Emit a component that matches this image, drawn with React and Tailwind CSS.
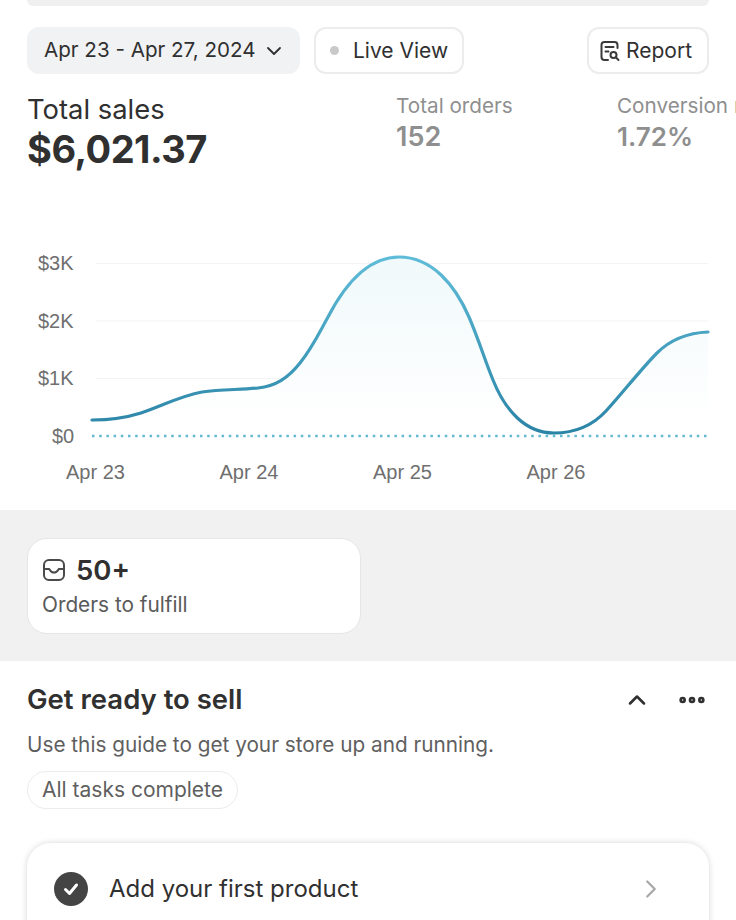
import React from "react";
import { ChevronDown, ChevronRight, ChevronUp, Ellipsis } from "lucide-react";

const xLabels = ["Apr 23", "Apr 24", "Apr 25", "Apr 26"];
const line =
  "M92 420 C112 420 125 418 141 413 C162 406 180 396 202 392 C222 389 240 390 258 388 C276 386 288 378 300 363 C312 348 318 335 328 317 C342 290 365 257 399 257 C432 257 455 285 469 317 C480 343 484 358 493 380 C505 410 525 433 554 433 C578 433 594 424 606 411 C620 396 642 368 657 353 C668 342 685 333 708 332";

function ReportIcon() {
  return (
    <svg width="22" height="22" viewBox="0 0 22 22" fill="none" stroke="#3a3a3a" strokeWidth="2" strokeLinecap="round">
      <path d="M9 20H5.500A3 3 0 0 1 2.500 17V5A3 3 0 0 1 5.500 2H15.500A3 3 0 0 1 18.500 5V8" />
      <path d="M6.500 7H14.500M6.500 11.500H9.500" />
      <circle cx="14.500" cy="15" r="3" />
      <path d="M17 17.500L19.500 20" />
    </svg>
  );
}

function InboxIcon() {
  return (
    <svg width="24" height="24" viewBox="0 0 24 24" fill="none" stroke="#4a4a4a" strokeWidth="2" strokeLinecap="round" strokeLinejoin="round">
      <rect x="2" y="2" width="20" height="20" rx="5" />
      <path d="M2 11H7C8 11 8 14.500 12 14.500C16 14.500 16 11 17 11H22" />
    </svg>
  );
}

function Chart() {
  return (
    <div className="mt-[77px] h-[260px] pl-[38px] pr-[26px]">
      <div className="flex h-[195px]">
        <div className="flex w-[52px] flex-col pt-[1px] text-[20px] leading-[24px] text-[#6f6f6f] font-['Liberation_Sans',sans-serif]">
          <div className="h-[57.500px] shrink-0">$3K</div>
          <div className="h-[57.500px] shrink-0">$2K</div>
          <div className="h-[57.500px] shrink-0">$1K</div>
          <div className="h-[24px] shrink-0 pl-[14px]">$0</div>
        </div>
        <svg width="620" height="195" viewBox="90 250 620 195" className="shrink-0">
          <defs>
            <linearGradient id="stroke" gradientUnits="userSpaceOnUse" x1="0" y1="257" x2="0" y2="434">
              <stop offset="0" stopColor="#5fbcd8" />
              <stop offset="1" stopColor="#2b84a6" />
            </linearGradient>
            <linearGradient id="area" gradientUnits="userSpaceOnUse" x1="0" y1="257" x2="0" y2="436">
              <stop offset="0" stopColor="#f0f9fb" />
              <stop offset="0.9" stopColor="#ffffff" />
            </linearGradient>
          </defs>
          <path d="M96 263.500H708M96 321H708M96 378.500H708" stroke="#f3f3f3" strokeWidth="1" />
          <path d={`${line} V436 H92 Z`} fill="url(#area)" />
          <path d="M92 436H708" stroke="#62b9d0" strokeWidth="2.500" strokeDasharray="2.500 4.700" />
          <path d={line} fill="none" stroke="url(#stroke)" strokeWidth="3.200" strokeLinecap="round" />
        </svg>
      </div>
      <div className="-ml-[38px] mt-[15px] flex pl-[66px] text-[20px] leading-[24px] text-[#6f6f6f] font-['Liberation_Sans',sans-serif]">
        {xLabels.map((label) => (
          <div key={label} className="w-[153.500px]">
            {label}
          </div>
        ))}
      </div>
    </div>
  );
}

export default function App() {
  return (
    <div className="h-[920px] w-[736px] overflow-hidden bg-white font-['Inter',sans-serif] text-[#303030]">
      <div className="mx-[27px] h-[6px] rounded-b-xl bg-[#f0f0f0]" />

      <div className="mx-[27px] mt-[21px] flex h-[47px] items-stretch">
        <div className="flex w-[273px] items-center gap-[6px] rounded-xl bg-[#f1f2f3] pl-[17px] text-[20.600px]">
          <span>Apr 23 - Apr 27, 2024</span>
          <ChevronDown size={24} strokeWidth={1.800} />
        </div>
        <div className="ml-[14px] flex w-[150px] items-center rounded-xl border-2 border-[#ececec] pl-[14px] text-[21px]">
          <span className="mr-[14px] h-[9px] w-[9px] rounded-full bg-[#c9c9c9]" />
          <span>Live View</span>
        </div>
        <div className="ml-auto flex w-[122px] items-center gap-[5px] rounded-xl border-2 border-[#ececec] pl-[10px] text-[21px]">
          <ReportIcon />
          <span>Report</span>
        </div>
      </div>

      <div className="mt-[18px] flex pl-[27px]">
        <div className="w-[369px]">
          <div className="text-[27.400px] leading-[34px]">Total sales</div>
          <div className="-mt-[1px] text-[38px] leading-[48px] font-bold tracking-[-0.5px]">$6,021.37</div>
        </div>
        <div className="w-[221px] pt-[1px] text-[#8f8f8f]">
          <div className="text-[20.700px] leading-[26px]">Total orders</div>
          <div className="mt-[2px] text-[27px] leading-[32px] font-semibold">152</div>
        </div>
        <div className="min-w-0 flex-1 overflow-hidden whitespace-nowrap pt-[1px] text-[#8f8f8f]">
          <div className="text-[20.700px] leading-[26px]">Conversion rate</div>
          <div className="mt-[2px] text-[26px] leading-[32px] font-semibold">1.72%</div>
        </div>
      </div>

      <Chart />

      <div className="h-[151px] bg-[#f1f1f1] pl-[27px] pt-[28px]">
        <div className="h-[96px] w-[334px] rounded-[20px] border border-[#e6e6e6] bg-white pl-[14px] pt-[14px]">
          <div className="flex items-center gap-[10px]">
            <InboxIcon />
            <span className="text-[27.500px] leading-[34px] font-semibold">50+</span>
          </div>
          <div className="mt-[5px] text-[20.800px] leading-[26px] text-[#5a5a5a]">Orders to fulfill</div>
        </div>
      </div>

      <div className="px-[27px] pt-[22px]">
        <div className="flex h-[34px] items-center">
          <span className="text-[27.500px] font-semibold">Get ready to sell</span>
          <ChevronUp className="ml-auto" size={28} strokeWidth={2.200} />
          <Ellipsis className="ml-[25px] mr-[1px]" size={32} strokeWidth={3} />
        </div>
        <div className="mt-[15px] text-[20.750px] leading-[26px] text-[#5f5f5f]">Use this guide to get your store up and running.</div>
        <div className="mt-[13px] flex h-[38px] w-[211px] items-center justify-center rounded-full border border-[#ececec] text-[21px] text-[#5f5f5f]">
          All tasks complete
        </div>
        <div className="mt-[34px] flex h-[120px] items-start rounded-[24px] bg-white pl-[27px] pr-[43px] pt-[29px] shadow-[0_0_6px_rgba(0,0,0,0.16)]">
          <div className="flex h-[34px] w-[34px] items-center justify-center rounded-full bg-[#444444]">
            <svg width="18" height="18" viewBox="0 0 18 18" fill="none" stroke="#ffffff" strokeWidth="3" strokeLinecap="round" strokeLinejoin="round">
              <path d="M3.500 9.500L7.500 13.500L14.500 5" />
            </svg>
          </div>
          <span className="ml-[21px] text-[24px] leading-[34px]">Add your first product</span>
          <ChevronRight className="ml-auto mt-[2px] text-[#a8a8a8]" size={30} strokeWidth={1.800} />
        </div>
      </div>
    </div>
  );
}
